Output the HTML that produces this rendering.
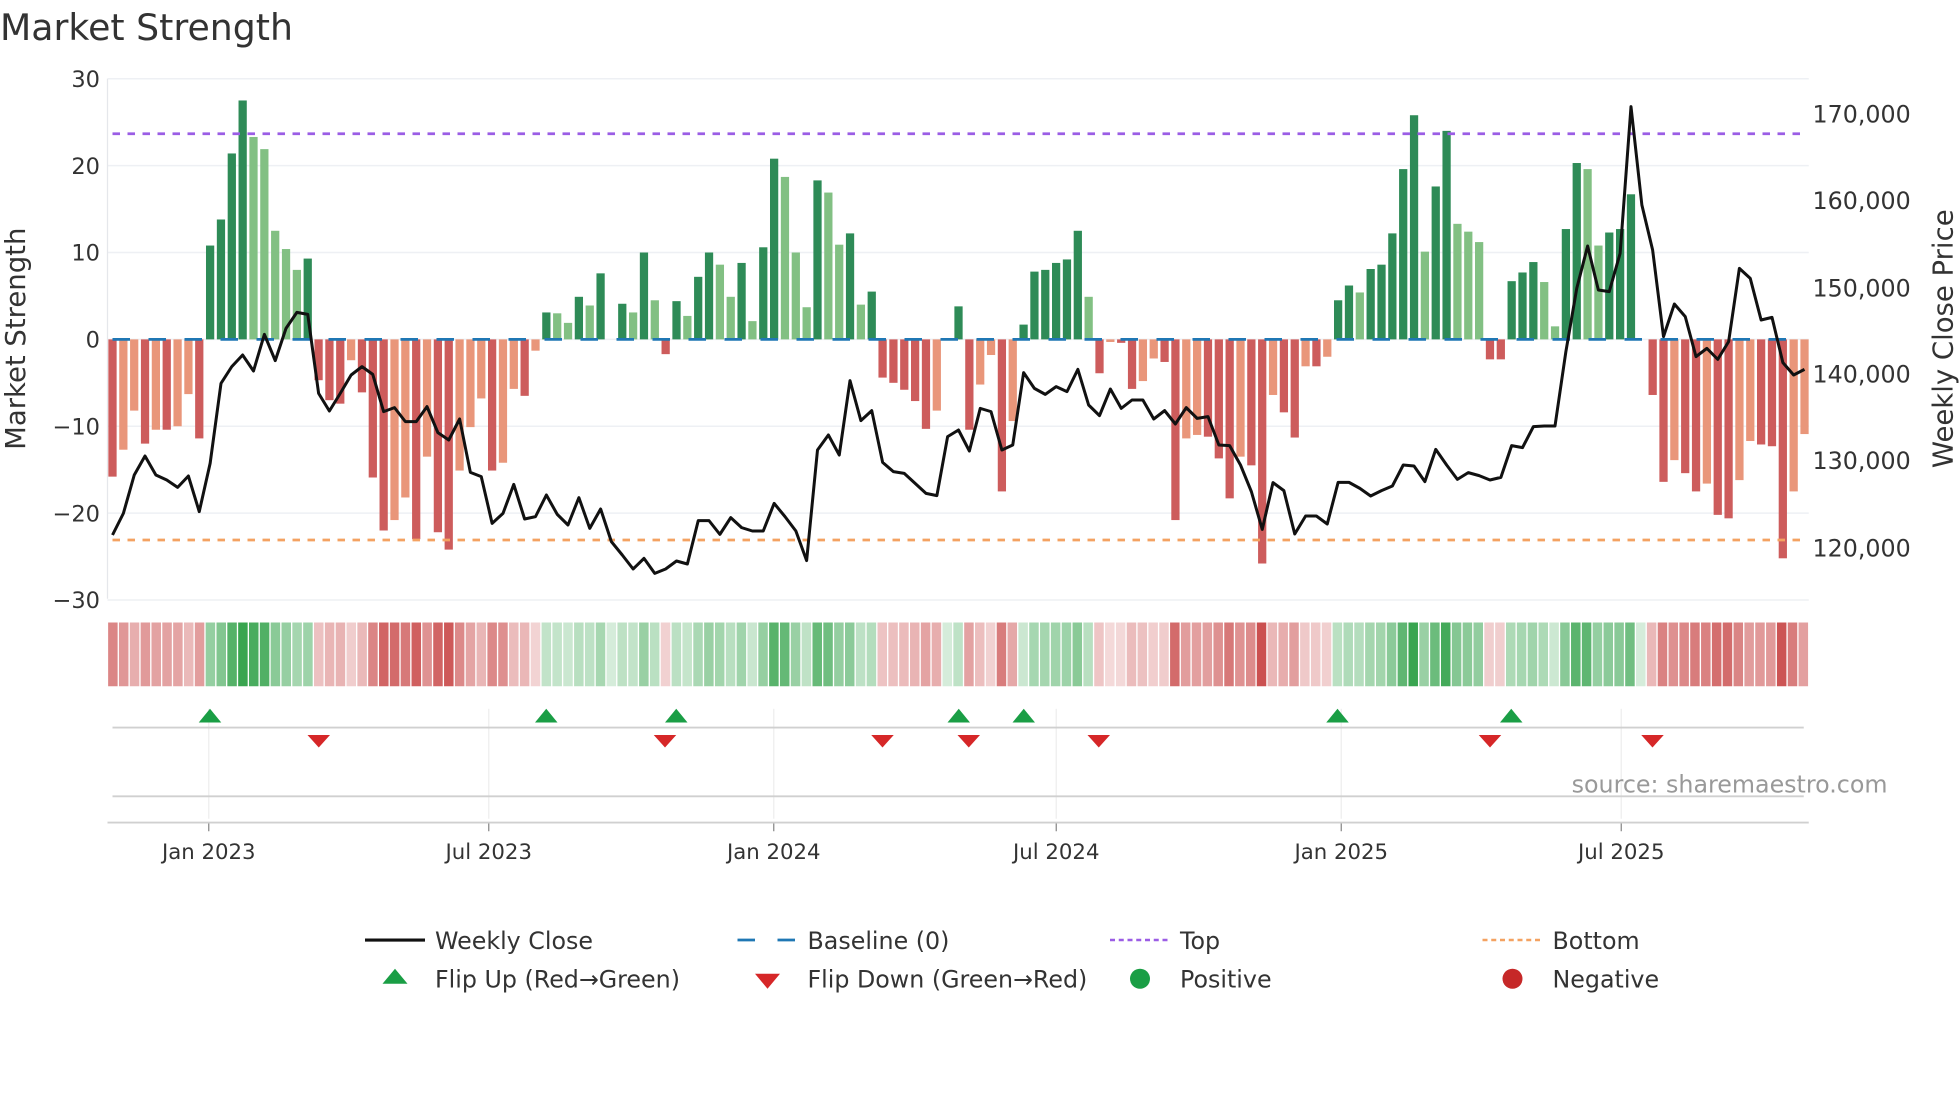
<!DOCTYPE html>
<html><head><meta charset="utf-8"><style>
html,body{margin:0;padding:0;background:#fff;}
svg{display:block;}
text{font-family:"DejaVu Sans","Liberation Sans",sans-serif;fill:#333;}
</style></head><body>
<svg id="s" width="1960" height="1102" viewBox="0 0 1568 881.6" xmlns="http://www.w3.org/2000/svg"></svg>
<script>
const V=[-15.8,-12.7,-8.2,-12,-10.4,-10.4,-10,-6.3,-11.4,10.8,13.8,21.4,27.5,23.3,21.9,12.5,10.4,8.0,9.3,-4.7,-7,-7.4,-2.4,-6.1,-15.9,-22,-20.8,-18.2,-23,-13.5,-22.2,-24.2,-15.1,-10.1,-6.8,-15.1,-14.2,-5.7,-6.5,-1.3,
3.1,3.0,1.9,4.9,3.9,7.6,0,4.1,3.1,10.0,4.5,-1.7,4.4,2.7,7.2,10.0,8.6,4.9,8.8,2.1,10.6,20.8,18.7,10.0,3.7,18.3,16.9,10.9,12.2,4.0,5.5,-4.4,-5.0,-5.8,-7.1,-10.3,-8.2,0,3.8,-10.4,
-5.2,-1.8,-17.5,-9.4,1.7,7.8,8.0,8.8,9.2,12.5,4.9,-3.9,-0.3,-0.4,-5.7,-4.8,-2.2,-2.6,-20.8,-11.4,-11,-11.2,-13.7,-18.3,-13.5,-14.5,-25.8,-6.4,-8.4,-11.3,-3.1,-3.1,-2,4.5,6.2,5.4,8.1,8.6,12.2,19.6,25.8,
10.1,17.6,24,13.3,12.4,11.2,-2.3,-2.3,6.7,7.7,8.9,6.6,1.5,12.7,20.3,19.6,10.8,12.3,12.7,16.7,0,-6.4,-16.4,-13.9,-15.4,-17.5,-16.6,-20.2,-20.6,-16.2,-11.7,-12.1,-12.3,-25.2,-17.5,-10.9];
const P=[1395,1330,1215,1158,1215,1230,1252,1218,1325,1180,940,890,855,903,793,872,775,727,733,970,1023,970,915,890,913,1025,1013,1055,1055,1010,1088,1110,1047,1207,1220,1360,1330,1243,1347,1340,
1275,1333,1365,1283,1375,1317,1415,1455,1497,1465,1510,1497,1473,1482,1352,1352,1393,1343,1373,1383,1383,1300,1340,1383,1472,1140,1095,1155,932,1052,1022,1177,1205,1210,1240,1270,1277,1100,1080,1143,
1015,1025,1140,1125,908,955,973,950,965,898,1005,1037,957,1015,990,990,1047,1022,1062,1013,1045,1040,1125,1127,1185,1265,1378,1238,1262,1392,1338,1338,1362,1237,1237,1255,1278,1262,1248,1185,1188,
1235,1138,1185,1228,1208,1217,1230,1222,1127,1133,1070,1068,1068,845,655,528,660,665,550,110,405,540,800,702,740,860,835,868,815,595,625,750,742,878,915,898];
let o=[];
const X=i=>90+i*8.677, Z=271.5, K=6.95;
o.push('<text x="0" y="32" font-size="29">Market Strength</text>');
[30,20,10,0,-10,-20,-30].forEach(v=>{const y=Z-v*K;o.push(`<line x1="86" x2="1447" y1="${y}" y2="${y}" stroke="#eef0f4" stroke-width="1.2"/>`);
o.push(`<text x="80" y="${y+6.5}" font-size="18" text-anchor="end">${v<0?'−'+(-v):v}</text>`);});
o.push('<line x1="86" x2="86" y1="63" y2="479" stroke="#e5e7eb"/>');
[[170,91],[160,160],[150,230],[140,299],[130,368],[120,438]].forEach(a=>o.push(`<text x="1450" y="${a[1]+7}" font-size="19">${a[0]},000</text>`));
o.push('<text transform="translate(20,271) rotate(-90)" font-size="22" text-anchor="middle">Market Strength</text>');
o.push('<text transform="translate(1562,271) rotate(-90)" font-size="22" text-anchor="middle">Weekly Close Price</text>');
let prev=0;
V.forEach((v,i)=>{if(v==0){prev=0;return;}const h=Math.abs(v)*K;const y=v>0?Z-h:Z;
const dark=(Math.sign(v)!=Math.sign(prev))||Math.abs(v)>=Math.abs(prev);
const c=v>0?(dark?"#2e8b57":"#82c083"):(dark?"#cd5c5c":"#e9967a");prev=v;
o.push(`<rect x="${X(i)-3.3}" y="${y}" width="6.6" height="${h}" fill="${c}"/>`);});
o.push('<line x1="90" x2="1443" y1="271.5" y2="271.5" stroke="#1f77b4" stroke-width="2.2" stroke-dasharray="14 14.8"/>');
o.push('<line x1="90" x2="1443" y1="107" y2="107" stroke="#9b5de5" stroke-width="2.2" stroke-dasharray="6 6"/>');
o.push('<line x1="90" x2="1443" y1="432" y2="432" stroke="#f4a261" stroke-width="2.2" stroke-dasharray="6 6"/>');
o.push(`<polyline fill="none" stroke="#111" stroke-width="2.4" stroke-linejoin="round" points="${P.map((p,i)=>X(i).toFixed(1)+','+(56+p/3.75).toFixed(1)).join(' ')}"/>`);
V.forEach((v,i)=>{const a=Math.min(Math.abs(v)/26,1);const al=0.2+0.75*a;const c=v>0?`rgba(46,160,70,${al})`:`rgba(200,70,70,${al})`;
o.push(`<rect x="${(86+i*8.669+0.5).toFixed(2)}" y="498" width="7.6" height="51" fill="${v==0?'rgba(46,160,70,0.2)':c}"/>`);});
const tk=[["Jan 2023",167],["Jul 2023",391],["Jan 2024",619],["Jul 2024",845],["Jan 2025",1073],["Jul 2025",1297]];
tk.forEach(t=>{o.push(`<line x1="${t[1]}" x2="${t[1]}" y1="567" y2="655" stroke="#eee"/>`);
o.push(`<line x1="${t[1]}" x2="${t[1]}" y1="658" y2="665" stroke="#888"/>`);
o.push(`<text x="${t[1]}" y="687" font-size="17" text-anchor="middle">${t[0]}</text>`);});
o.push('<line x1="90" x2="1443" y1="582" y2="582" stroke="#d0d0d0" stroke-width="1.5"/>');
o.push('<line x1="90" x2="1443" y1="637" y2="637" stroke="#d0d0d0" stroke-width="1.5"/>');
o.push('<line x1="86" x2="1447" y1="658" y2="658" stroke="#d0d0d0" stroke-width="1.5"/>');
[168,437,541,767,819,1070,1209].forEach(x=>o.push(`<path d="M${x-9} 578 L${x} 567 L${x+9} 578 Z" fill="#1a9e45"/>`));
[255,532,706,775,879,1192,1322].forEach(x=>o.push(`<path d="M${x-9} 588 L${x} 598 L${x+9} 588 Z" fill="#d62728"/>`));
o.push('<text x="1510" y="634" font-size="19" style="fill:#999" text-anchor="end">source: sharemaestro.com</text>');
o.push('<line x1="292" x2="340" y1="752" y2="752" stroke="#111" stroke-width="2.5"/><text x="348" y="759" font-size="19">Weekly Close</text>');
o.push('<line x1="590" x2="636" y1="752" y2="752" stroke="#1f77b4" stroke-width="2.2" stroke-dasharray="14 18"/><text x="646" y="759" font-size="19">Baseline (0)</text>');
o.push('<line x1="888" x2="934" y1="752" y2="752" stroke="#9b5de5" stroke-width="2" stroke-dasharray="4 3"/><text x="944" y="759" font-size="19">Top</text>');
o.push('<line x1="1186" x2="1232" y1="752" y2="752" stroke="#f4a261" stroke-width="2" stroke-dasharray="4 3"/><text x="1242" y="759" font-size="19">Bottom</text>');
o.push('<path d="M306 787 L316 775 L326 787 Z" fill="#1a9e45"/><text x="348" y="790" font-size="19">Flip Up (Red→Green)</text>');
o.push('<path d="M604 779 L614 791 L624 779 Z" fill="#d62728"/><text x="646" y="790" font-size="19">Flip Down (Green→Red)</text>');
o.push('<circle cx="912" cy="783" r="8" fill="#1a9e45"/><text x="944" y="790" font-size="19">Positive</text>');
o.push('<circle cx="1210" cy="783" r="8" fill="#c62828"/><text x="1242" y="790" font-size="19">Negative</text>');
document.getElementById('s').innerHTML=o.join('');
</script>
</body></html>
